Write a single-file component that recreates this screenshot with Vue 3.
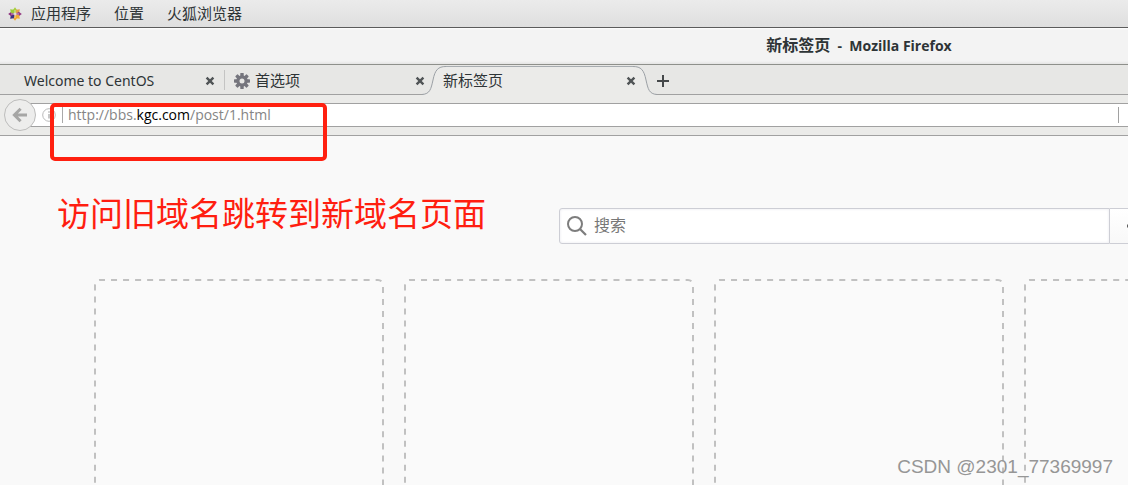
<script setup>
import { ref } from 'vue'

const menus = ['应用程序', '位置', '火狐浏览器']
const query = ref('')
const petals = [
  { angle: 0, color: '#a6cf3c' },
  { angle: 45, color: '#e0a548' },
  { angle: 90, color: '#963c82' },
  { angle: 135, color: '#f2ab35' },
  { angle: 180, color: '#efa72f' },
  { angle: 225, color: '#3a3280' },
  { angle: 270, color: '#8c2f7c' },
  { angle: 315, color: '#9ccb3c' },
]
const teeth = [0, 45, 90, 135, 180, 225, 270, 315]
</script>

<template>
  <div class="desktop">
    <header class="panel">
      <svg class="logo" viewBox="0 0 14 14" aria-hidden="true">
        <g v-for="p in petals" :key="p.angle" :transform="`rotate(${p.angle} 7 7)`">
          <path d="M7 6.4 L4.8 3.2 L7 .2 L9.2 3.2Z" :fill="p.color" />
        </g>
        <path d="M7 3v8M3 7h8" stroke="#f3eef2" stroke-width=".6" />
      </svg>
      <button v-for="m in menus" :key="m" class="menu" type="button">{{ m }}</button>
    </header>

    <div class="titlebar"><h1><span>新标签页</span>&nbsp; -&nbsp; Mozilla Firefox</h1></div>

    <nav class="tabs">
      <div class="tab first">
        <button class="label" type="button">Welcome to CentOS</button>
        <button class="close" type="button" aria-label="关闭">
          <svg viewBox="0 0 10 10"><path d="M1.6 1.6l6.8 6.8M8.4 1.6l-6.8 6.8" /></svg>
        </button>
      </div>
      <div class="tab second">
        <svg class="gear" viewBox="0 0 16 16" aria-hidden="true">
          <rect v-for="t in teeth" :key="t" x="6.3" y="0" width="3.4" height="4" rx=".6" fill="#75757d" :transform="`rotate(${t} 8 8)`" />
          <circle cx="8" cy="8" r="4.1" fill="none" stroke="#75757d" stroke-width="3.2" />
        </svg>
        <button class="label" type="button">首选项</button>
        <button class="close" type="button" aria-label="关闭">
          <svg viewBox="0 0 10 10"><path d="M1.6 1.6l6.8 6.8M8.4 1.6l-6.8 6.8" /></svg>
        </button>
      </div>
      <div class="tab active">
        <svg class="curve" viewBox="0 0 24 30" aria-hidden="true">
          <path d="M0 30 V29.5 C8 29 9 24 11 15 C13 5 16 1.5 24 1.5 V30Z" fill="#ebebe9" />
          <path d="M0 29.5 C8 29 9 24 11 15 C13 5 16 1.5 24 1.5" fill="none" stroke="#9ba0a5" />
        </svg>
        <div class="body">
          <button class="label" type="button">新标签页</button>
          <button class="close" type="button" aria-label="关闭">
            <svg viewBox="0 0 10 10"><path d="M1.6 1.6l6.8 6.8M8.4 1.6l-6.8 6.8" /></svg>
          </button>
        </div>
        <svg class="curve" viewBox="0 0 24 30" aria-hidden="true">
          <path d="M24 30 V29.5 C16 29 15 24 13 15 C11 5 8 1.5 0 1.5 V30Z" fill="#ebebe9" />
          <path d="M24 29.5 C16 29 15 24 13 15 C11 5 8 1.5 0 1.5" fill="none" stroke="#9ba0a5" />
        </svg>
      </div>
      <button class="add" type="button" aria-label="新建标签页">
        <svg viewBox="0 0 12 12"><path d="M6 0v12M0 6h12" stroke="#45484a" stroke-width="2" /></svg>
      </button>
    </nav>

    <div class="toolbar">
      <button class="back" type="button" aria-label="后退">
        <svg viewBox="0 0 16 16"><path d="M15 8H3M8.6 1.8L2.4 8l6.2 6.2" fill="none" stroke="#a6a6a5" stroke-width="3" /></svg>
      </button>
      <div class="address">
        <svg class="info" viewBox="0 0 14 14" aria-hidden="true">
          <circle cx="7" cy="7" r="6.3" fill="none" stroke="#bababa" />
          <path d="M7 6v4.6M7 3.2v1.6" stroke="#bababa" stroke-width="1.6" />
        </svg>
        <a class="url" href="http://bbs.kgc.com/post/1.html">http://bbs.<span>kgc.com</span>/post/1.html</a>
        <i class="divider"></i>
      </div>
    </div>

    <main class="page">
      <form class="search" @submit.prevent>
        <label class="field">
          <svg viewBox="0 0 20 20" aria-hidden="true">
            <circle cx="8" cy="8" r="7" fill="none" stroke="#7d7d7d" stroke-width="2" />
            <path d="M13 13l6 6" stroke="#7d7d7d" stroke-width="2.2" />
          </svg>
          <input v-model="query" type="text" placeholder="搜索" aria-label="搜索" />
        </label>
        <button class="go" type="submit" aria-label="搜索">
          <svg viewBox="0 0 16 12"><path d="M0 6h14M9 1l5 5-5 5" fill="none" stroke="#606060" stroke-width="3" /></svg>
        </button>
      </form>
      <div class="tiles">
        <svg v-for="n in 4" :key="n" class="tile" aria-hidden="true">
          <rect x="1" y="1" width="288" height="288" rx="5" pathLength="1140" />
        </svg>
      </div>
    </main>

    <div class="mark"></div>
    <p class="note">访问旧域名跳转到新域名页面</p>
    <p class="watermark">CSDN @2301_77369997</p>
  </div>
</template>

<style>
body {
  margin: 0;
}
</style>

<style scoped>
.desktop {
  position: relative;
  display: flex;
  flex-direction: column;
  height: 100vh;
  overflow: hidden;
  background: #f9f9f9;
  color: #2e3436;
  font-family: "Noto Sans", "Noto Sans CJK SC", sans-serif;
  font-size: 15px;
}
* {
  box-sizing: border-box;
}
svg {
  display: block;
  flex: none;
}
button {
  padding: 0;
  border: 0;
  background: none;
  color: inherit;
  font: inherit;
  white-space: nowrap;
}
.panel {
  display: flex;
  flex: none;
  align-items: center;
  height: 28px;
  padding-left: 8px;
  border-bottom: 1px solid #5c5c5c;
  background: linear-gradient(#ebebeb, #dfdfdf);
}
.logo {
  width: 14px;
  height: 14px;
  margin-right: 9px;
}
.menu {
  height: 27px;
  padding-bottom: 1px;
  line-height: 26px;
  margin-right: 23px;
}
.titlebar {
  flex: none;
  height: 37px;
  padding-left: 52.3%;
  border-bottom: 1px solid #8e908b;
  background: linear-gradient(#fff 0, #f3f3f3 2px, #f3f3f3 33px, #e4e4e3 36px);
  text-align: center;
}
h1 {
  margin: 0;
  font-family: "Open Sans", "Noto Sans CJK SC", sans-serif;
  font-size: 14px;
  font-weight: 700;
  line-height: 36px;
}
h1 span {
  font-size: 16px;
  line-height: 1;
}
.tabs {
  display: flex;
  flex: none;
  height: 30px;
  background: linear-gradient(#a1a1a1, #a1a1a1) bottom / 100% 1px no-repeat #e7e7e5;
}
.tab {
  display: flex;
  align-items: center;
}
.label {
  flex: 1;
  text-align: left;
  font-size: 15px;
  line-height: 30px;
}
.first {
  width: 225px;
  padding: 0 10px 0 24px;
  background: linear-gradient(#c4c4c3, #c4c4c3) right 5px / 1px 20px no-repeat;
}
.first .label {
  padding-top: 2px;
  font-size: 14px;
  line-height: 28px;
}
.second {
  width: 200px;
  padding: 0 0 0 9px;
}
.gear {
  width: 16px;
  height: 16px;
  margin-right: 5px;
}
.close,
.add,
.gear {
  margin-top: 2px;
}
.close svg {
  width: 10px;
  height: 10px;
}
.close path {
  stroke: #505456;
  stroke-width: 2.4;
}
.active {
  width: 235px;
  margin-left: -3px;
}
.curve {
  width: 24px;
  height: 30px;
}
.body {
  display: flex;
  flex: 1;
  align-items: center;
  align-self: stretch;
  margin-top: 1px;
  border-top: 1px solid #a7acb0;
  background: #ebebe9;
}
.body .label {
  margin-left: -3px;
  padding-bottom: 2px;
  line-height: 26px;
}
.body .close {
  z-index: 1;
  margin-top: 0;
  margin-right: -3px;
}
.add svg {
  width: 12px;
  height: 12px;
}
.toolbar {
  display: flex;
  flex: none;
  align-items: center;
  height: 41px;
  padding-left: 4px;
  border-bottom: 1px solid #a1a1a1;
  background: #ebebe9;
}
.back {
  z-index: 1;
  display: grid;
  place-items: center;
  flex: none;
  width: 32px;
  height: 32px;
  border: 1px solid #bdbdbc;
  border-radius: 50%;
  background: #ededec;
}
.back svg {
  width: 16px;
  height: 16px;
}
.address {
  display: flex;
  flex: 1;
  align-items: center;
  height: 24px;
  margin-left: -6px;
  padding: 0 9px 0 12px;
  border: solid #a1a1a1;
  border-width: 1px 0;
  background: #fff;
}
.info {
  width: 14px;
  height: 14px;
}
.url {
  flex: 1;
  margin-left: 6px;
  padding-left: 5px;
  border-left: 1px solid #a9a9a9;
  color: #858585;
  font-family: "Open Sans", sans-serif;
  font-size: 14px;
  line-height: 16px;
  text-decoration: none;
}
.url span {
  color: #000;
}
.divider {
  width: 1px;
  height: 16px;
  background: #a1a1a1;
}
.page {
  flex: 1;
  min-height: 0;
  padding-top: 72px;
}
.search {
  display: flex;
  height: 36px;
  margin-left: 559px;
}
.field {
  display: flex;
  flex: 1;
  align-items: center;
  padding-left: 7px;
  border: 1px solid #cdced5;
  border-radius: 3px 0 0 3px;
  background: #fff;
  box-shadow: inset 0 0 3px #e8e8ee;
}
.field svg {
  width: 20px;
  height: 20px;
}
.field input {
  flex: 1;
  min-width: 0;
  padding: 0 0 2px 7px;
  border: 0;
  outline: 0;
  background: none;
  color: inherit;
  font: inherit;
  font-size: 16px;
}
.field input::placeholder {
  color: #777;
  opacity: 1;
}
.go {
  width: 18px;
  padding-left: 17px;
  border: solid #cdced5;
  border-width: 1px 0;
  background: linear-gradient(#fff, #f8f8f8);
  overflow: hidden;
}
.go svg {
  width: 16px;
  height: 12px;
}
.tiles {
  display: flex;
  gap: 20px;
  margin-top: 35px;
  margin-left: 94px;
}
.tile {
  width: 290px;
  height: 290px;
}
.tile rect {
  fill: #fafafa;
  stroke: #c1c1c1;
  stroke-width: 2;
  stroke-dasharray: 6 6;
  stroke-dashoffset: 1;
}
.mark {
  position: absolute;
  top: 103px;
  left: 50px;
  width: 277px;
  height: 58px;
  border: 4px solid #ff2010;
  border-radius: 5px;
}
.note {
  position: absolute;
  top: 188px;
  left: 57px;
  margin: 0;
  color: #ff1e10;
  font-family: "Noto Sans CJK SC", sans-serif;
  font-size: 33px;
  line-height: 48px;
  white-space: nowrap;
}
.watermark {
  position: absolute;
  right: 15px;
  bottom: 7px;
  margin: 0;
  color: #969696;
  font-family: "Liberation Sans", sans-serif;
  font-size: 19px;
  line-height: 22px;
}
</style>
